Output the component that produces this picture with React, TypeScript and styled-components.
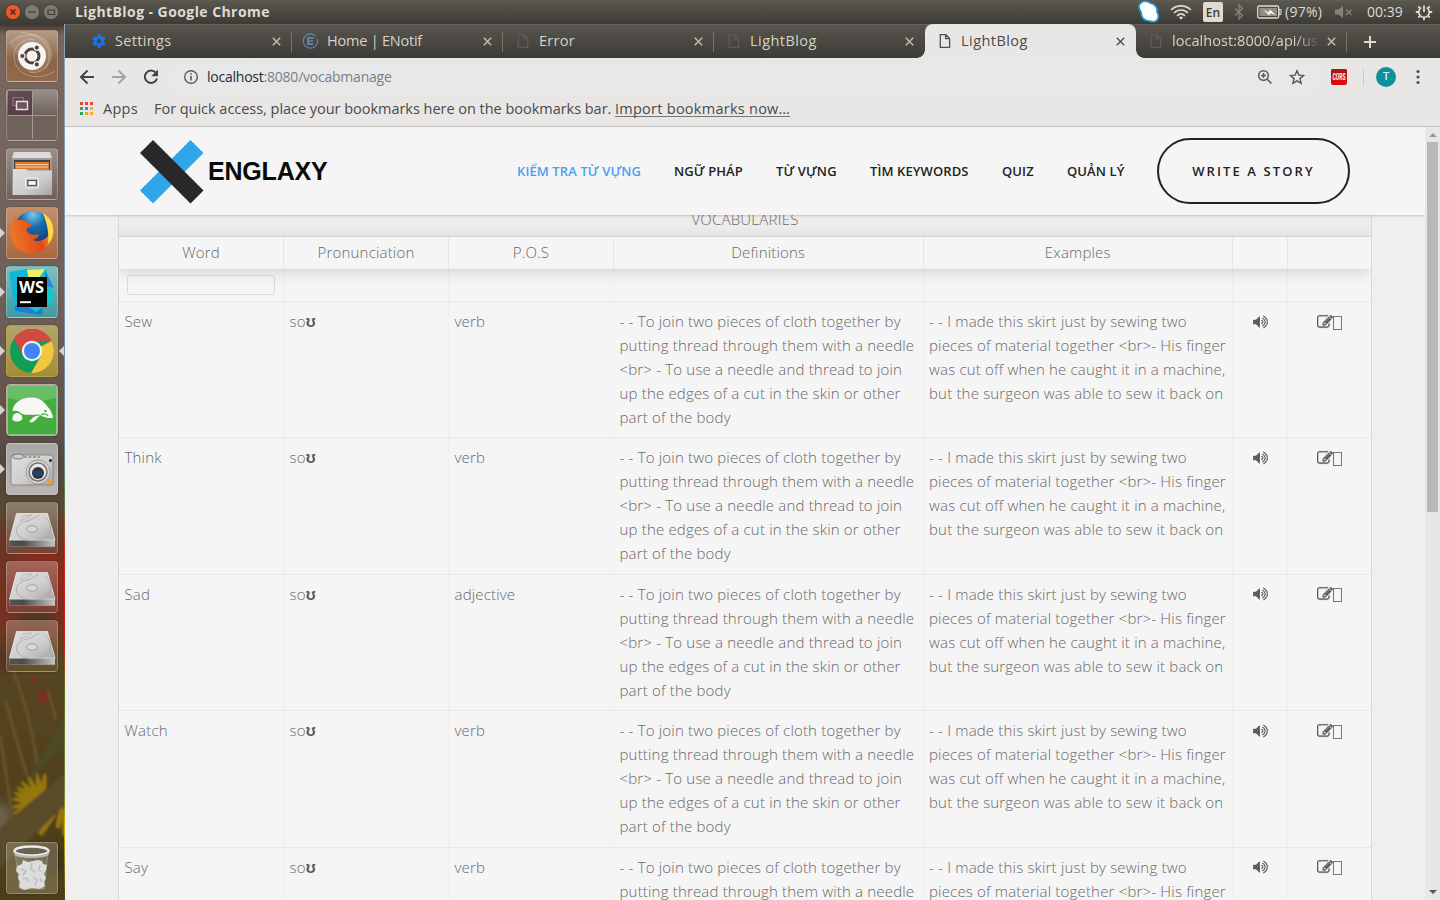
import React from "react";
import styled, { createGlobalStyle } from "styled-components";

const UI_FONT = `"Open Sans", "Noto Sans", sans-serif`;

const GlobalStyle = createGlobalStyle`
  * { box-sizing: border-box; }
  html, body { margin: 0; padding: 0; overflow: hidden; }
  body { font-family: ${UI_FONT}; background: #efefef; }
`;

const Desktop = styled.div`
  width: 1440px;
  height: 900px;
  display: flex;
  flex-direction: column;
  overflow: hidden;
`;

/* ---------- top panel ---------- */

const Panel = styled.header`
  flex: none;
  height: 24px;
  display: flex;
  align-items: center;
  padding-left: 5px;
  color: #dfdbd2;
  background: linear-gradient(#5f5d53 0, #57554c 2px, #3c3b37 100%);
`;

const WindowButtons = styled.div`
  display: flex;
  gap: 3px;
  width: 70px;
`;

const WindowTitle = styled.div`
  font-size: 14px;
  font-weight: 700;
  letter-spacing: 0.43px;
  line-height: 24px;
  white-space: nowrap;
  width: 1061px;
`;

const Tray = styled.div`
  display: flex;
  align-items: center;
  height: 24px;
  svg { display: block; flex: none; }
`;

const Lang = styled.span`
  width: 20px;
  height: 20px;
  margin: 0 10px 0 11px;
  border-radius: 2px;
  background: #dfdbd2;
  color: #3c3b37;
  font: 600 12px/21px ${UI_FONT};
  text-align: center;
`;

const TrayText = styled.span<{ $w: number; $ml: number; $ls?: number }>`
  width: ${(p) => p.$w}px;
  margin-left: ${(p) => p.$ml}px;
  letter-spacing: ${(p) => p.$ls ?? 0}px;
  font-size: 14px;
  line-height: 24px;
  white-space: nowrap;
`;

/* ---------- launcher ---------- */

const Body = styled.div`
  flex: 1;
  min-height: 0;
  display: flex;
`;

const Launcher = styled.aside`
  position: relative;
  flex: none;
  width: 65px;
  height: 876px;
  padding: 6px 0 6px 6px;
  display: flex;
  flex-direction: column;
  gap: 7px;
  overflow: hidden;
`;

const Wallpaper = styled.svg`
  position: absolute;
  inset: 0;
`;

const Tile = styled.div<{ $bg: string; $edge?: string; $last?: boolean }>`
  position: relative;
  flex: none;
  width: 52px;
  height: 52px;
  border-radius: 4px;
  border: 1px solid ${(p) => p.$edge ?? "rgba(255,255,255,.25)"};
  background: ${(p) => p.$bg};
  box-shadow: 0 0 2px rgba(0, 0, 0, 0.3);
  margin-top: ${(p) => (p.$last ? "auto" : "0")};
  > svg { display: block; width: 50px; height: 50px; }
`;

const Marker = styled.span<{ $right?: boolean }>`
  position: absolute;
  top: 20px;
  ${(p) => (p.$right ? "right: -7px; border-right: 5px solid #d5d2cd;" : "left: -7px; border-left: 5px solid #d5d2cd;")}
  border-top: 5px solid transparent;
  border-bottom: 5px solid transparent;
`;

/* ---------- browser ---------- */

const Browser = styled.main`
  flex: 1;
  min-width: 0;
  display: flex;
  flex-direction: column;
`;

const TabStrip = styled.div`
  flex: none;
  height: 34px;
  display: flex;
  padding-left: 16px;
  border-top: 1px solid #66645a;
  background: linear-gradient(#57554c, #3c3b37);
`;

const TabBox = styled.div<{ $active?: boolean; $sep?: boolean }>`
  position: relative;
  flex: none;
  width: 211px;
  height: 34px;
  margin-top: -1px;
  display: flex;
  align-items: center;
  padding: 0 11px 0 10px;
  color: ${(p) => (p.$active ? "#4c4c4c" : "#d5d2c9")};
  background: ${(p) => (p.$active ? "#e9e7e5" : "transparent")};
  border-radius: 8px 8px 0 0;
  ${(p) =>
    p.$sep &&
    `&::after { content: ""; position: absolute; right: 0; top: 8px; width: 1px; height: 20px; background: #777469; }`}
  ${(p) =>
    p.$active &&
    `&::before, &::after { content: ""; position: absolute; bottom: 0; width: 8px; height: 8px; }
     &::before { left: -8px; background: radial-gradient(circle at 0 0, transparent 7.5px, #e9e7e5 8px); }
     &::after { right: -8px; background: radial-gradient(circle at 100% 0, transparent 7.5px, #e9e7e5 8px); }`}
  svg { display: block; flex: none; }
`;

const TabTitle = styled.span<{ $fade?: boolean; $ls?: number; $ml?: number }>`
  flex: 1;
  min-width: 0;
  margin: 0 5px 0 ${(p) => p.$ml ?? 10}px;
  overflow: hidden;
  white-space: nowrap;
  font-size: 14.5px;
  letter-spacing: ${(p) => p.$ls ?? 0.2}px;
  line-height: 34px;
  ${(p) => p.$fade && "mask-image: linear-gradient(90deg, #000 82%, transparent 99%);"}
`;

const NewTab = styled.div`
  height: 33px;
  display: flex;
  align-items: center;
  padding: 0 0 0 17px;
`;

const Toolbar = styled.div`
  flex: none;
  height: 37px;
  display: flex;
  align-items: center;
  padding-left: 13px;
  background: #e9e7e5;
  svg { display: block; flex: none; }
`;

const NavButtons = styled.div`
  display: flex;
  gap: 14px;
  width: 95px;
`;

const Omnibox = styled.div`
  width: 1143px;
  height: 28px;
  border-radius: 14px;
  background: #e7e8ea;
  display: flex;
  align-items: center;
  padding: 0 11px 0 10px;
`;

const Url = styled.span`
  flex: 1;
  margin-left: 8px;
  font-size: 14px;
  letter-spacing: -0.23px;
  color: #7b7e83;
  b { font-weight: 400; color: #26282c; }
`;

const Cors = styled.svg`
  margin-left: 15px;
`;

const Split = styled.span`
  width: 1px;
  height: 16px;
  margin: 0 12px 0 16px;
  background: #c9c7c5;
`;

const Avatar = styled.span`
  width: 20px;
  height: 20px;
  margin-right: 20px;
  border-radius: 50%;
  background: #0b929d;
  color: #d8eef0;
  font: 500 11px/20px Roboto, sans-serif;
  text-align: center;
`;

const Bookmarks = styled.div`
  flex: none;
  height: 32px;
  display: flex;
  align-items: center;
  padding: 0 0 4px 15px;
  border-bottom: 1px solid #c4c2c0;
  background: #e9e7e5;
  color: #4a4a4a;
  font-size: 14.5px;
  white-space: nowrap;
`;

const AppsLabel = styled.span`
  width: 51px;
  margin-left: 10px;
  letter-spacing: 0.25px;
`;

const Hint = styled.span`
  width: 461px;
  letter-spacing: -0.03px;
`;

const ImportLink = styled.span`
  border-bottom: 1px solid #777;
  line-height: 15px;
  letter-spacing: 0.26px;
`;

/* ---------- page ---------- */

const Viewport = styled.div`
  flex: 1;
  min-height: 0;
  display: flex;
`;

const Page = styled.div`
  width: 1360px;
  height: 773px;
  overflow: hidden;
  background: #efefef;
`;

const SiteHeader = styled.div`
  position: relative;
  z-index: 2;
  height: 88px;
  display: flex;
  align-items: center;
  justify-content: space-between;
  padding: 0 75px;
  background: #f5f5f5;
  box-shadow: 0 1px 2px rgba(0, 0, 0, 0.18);
`;

const Brand = styled.div`
  display: flex;
  align-items: center;
  gap: 4px;
  font: 700 25px/64px "Liberation Sans", Arial, sans-serif;
  letter-spacing: -0.2px;
  color: #0a0a0a;
  svg { display: block; margin-top: 1px; }
`;

const Nav = styled.nav`
  display: flex;
  align-items: center;
  font-size: 13px;
  font-weight: 600;
  letter-spacing: 0.1px;
  white-space: nowrap;
`;

const NavItem = styled.a<{ $w: number; $on?: boolean }>`
  width: ${(p) => p.$w}px;
  color: ${(p) => (p.$on ? "#4a9ff0" : "#222")};
`;

const StoryButton = styled.a`
  width: 193px;
  height: 66px;
  border: 2px solid #222;
  border-radius: 33px;
  line-height: 62px;
  text-align: center;
  letter-spacing: 2.1px;
  color: #222;
`;

const Table = styled.div`
  width: 1254px;
  margin: -1px 0 0 53px;
  border: solid #d8d8d8;
  border-width: 0 1px;
  background: #f5f5f5;
  color: #686868;
  font-size: 15px;
  font-weight: 300;
  letter-spacing: 0.18px;
  line-height: 24px;
`;

const Caption = styled.div`
  height: 23px;
  padding-bottom: 2px;
  display: flex;
  align-items: flex-end;
  justify-content: center;
  letter-spacing: 0.22px;
  line-height: 30px;
  background: linear-gradient(#ececec 0 60%, #e4e4e4);
  border-bottom: 1px solid #d3d3d3;
`;

const Columns = styled.div<{ $h: number }>`
  display: grid;
  grid-template-columns: 165px 165px 165px 309.5px 309.5px 55px 83px;
  height: ${(p) => p.$h}px;
`;

const HeadRow = styled(Columns)`
  position: relative;
  z-index: 1;
  background: #f5f5f5;
  box-shadow: 0 2px 15px rgba(0, 0, 0, 0.16);
  clip-path: inset(0 0 -20px 0);
`;

const HeadCell = styled.div`
  border-right: 1px solid #e7e7e7;
  text-align: center;
  line-height: 31px;
  &:last-child { border-right: 0; }
`;

const BodyRow = styled(Columns)`
  border-bottom: 1px solid #e7e7e7;
`;

const Cell = styled.div<{ $center?: boolean }>`
  border-right: 1px solid #efefef;
  padding: 7px 0 0 ${(p) => (p.$center ? 0 : 5.5)}px;
  white-space: nowrap;
  ${(p) => p.$center && "display: flex; justify-content: center; align-items: flex-start;"}
  &:last-child { border-right: 0; }
  b { color: #5a5a5a; font: 700 16px/20px "Liberation Sans", "DejaVu Sans", sans-serif; }
`;

const FilterCell = styled(Cell)`
  padding: 6px 8px 0;
`;

const FilterInput = styled.div`
  width: 148px;
  height: 20px;
  border: 1px solid #dadada;
  border-radius: 3px;
`;

const IconRow = styled.span`
  display: flex;
  padding-top: 4.5px;
`;

const MissingGlyph = styled.i`
  width: 9px;
  height: 14px;
  margin: 2px 0 0;
  border: 1px solid #777;
`;

const Scrollbar = styled.div`
  flex: none;
  width: 15px;
  height: 773px;
  display: flex;
  flex-direction: column;
  align-items: center;
  background: #e7e7e7;
  padding: 6px 0;
`;

const Thumb = styled.div`
  width: 11px;
  height: 370px;
  margin-top: 5px;
  margin-bottom: auto;
  background: #b8b8b8;
`;

const Arrow = styled.i<{ $down?: boolean }>`
  border: solid transparent;
  ${(p) => (p.$down ? "border-width: 4px 4px 0; border-top-color: #555;" : "border-width: 0 4px 4px; border-bottom-color: #999;")}
`;

/* ---------- icons ---------- */

const Close = ({ color }: { color: string }) => (
  <svg width="9" height="9" viewBox="0 0 9 9" stroke={color} strokeWidth="1.5">
    <path d="M.8.8l7.4 7.4M8.2.8L.8 8.2" />
  </svg>
);

const PageIcon = ({ color }: { color: string }) => (
  <svg width="16" height="16" viewBox="0 0 16 16" fill="none" stroke={color} strokeWidth="1.3">
    <path d="M4 1.7h5.6L13.3 5.4v9H4zM9.4 1.8v3.8h3.8" transform="translate(1.3 0)" />
  </svg>
);

const GearIcon = () => (
  <svg width="16" height="16" viewBox="0 0 24 24" fill="#1a73e8">
    <path d="M19.43 12.98c.04-.32.07-.64.07-.98s-.03-.66-.07-.98l2.11-1.65c.19-.15.24-.42.12-.64l-2-3.46c-.12-.22-.39-.3-.61-.22l-2.49 1c-.52-.4-1.08-.73-1.69-.98l-.38-2.65C14.46 2.18 14.25 2 14 2h-4c-.25 0-.46.18-.49.42l-.38 2.65c-.61.25-1.17.59-1.69.98l-2.49-1c-.23-.09-.49 0-.61.22l-2 3.46c-.13.22-.07.49.12.64l2.11 1.65c-.04.32-.07.65-.07.98s.03.66.07.98l-2.11 1.65c-.19.15-.24.42-.12.64l2 3.46c.12.22.39.3.61.22l2.49-1c.52.4 1.08.73 1.69.98l.38 2.65c.03.24.24.42.49.42h4c.25 0 .46-.18.49-.42l.38-2.65c.61-.25 1.17-.59 1.69-.98l2.49 1c.23.09.49 0 .61-.22l2-3.46c.12-.22.07-.49-.12-.64l-2.11-1.65zM12 15.5c-1.93 0-3.5-1.57-3.5-3.5s1.57-3.5 3.5-3.5 3.5 1.57 3.5 3.5-1.57 3.5-3.5 3.5z" />
  </svg>
);

const ENotifIcon = () => (
  <svg width="17" height="18" viewBox="0 0 18 18" fill="none">
    <defs>
      <linearGradient id="en" x1="0" y1="0" x2="0" y2="18" gradientUnits="userSpaceOnUse">
        <stop offset="0" stopColor="#4f98a5" />
        <stop offset="1" stopColor="#7773b5" />
      </linearGradient>
    </defs>
    <circle cx="9" cy="9" r="7.6" stroke="url(#en)" strokeWidth="1.2" strokeDasharray="42 3" />
    <path d="M12.2 5.7H6.4v6.6h5.8M6.4 9h5.2" stroke="url(#en)" strokeWidth="1.8" />
  </svg>
);

const SpeakerIcon = () => (
  <svg width="17" height="16" viewBox="0 0 1792 1792" fill="#5c5c5c">
    <path d="M832 352v1088q0 26-19 45t-45 19-45-19l-333-333h-262q-26 0-45-19t-19-45v-384q0-26 19-45t45-19h262l333-333q19-19 45-19t45 19 19 45zm384 544q0 76-42.5 141.5t-112.5 93.5q-10 5-25 5-26 0-45-18.5t-19-45.5q0-21 12-35.5t29-25 34-23 29-36 12-56.5-12-56.5-29-36-34-23-29-25-12-35.5q0-27 19-45.5t45-18.5q15 0 25 5 70 27 112.5 93t42.5 142zm256 0q0 153-85 282.5t-225 188.5q-13 5-25 5-27 0-46-19t-19-45q0-39 39-59 56-29 76-44 74-54 115.5-135.5t41.5-173.5-41.5-173.5-115.5-135.5q-20-15-76-44-39-20-39-59 0-26 19-45t45-19q13 0 26 5 140 59 225 188.5t85 282.5zm256 0q0 230-127 422.5t-338 283.5q-13 5-26 5-26 0-45-19t-19-45q0-36 39-59 7-4 22.5-10.5t22.5-10.5q46-25 82-51 123-91 192-227t69-289-69-289-192-227q-36-26-82-51-7-4-22.5-10.5t-22.5-10.5q-39-23-39-59 0-26 19-45t45-19q13 0 26 5 211 91 338 283.5t127 422.5z" />
  </svg>
);

const EditIcon = () => (
  <svg width="16" height="16" viewBox="0 0 1792 1792" fill="#5c5c5c" stroke="#5c5c5c" strokeWidth="30">
    <path d="M888 1184l116-116-152-152-116 116v56h96v96h56zm440-720q-16-16-33 1l-350 350q-17 17-1 33t33-1l350-350q17-17 1-33zm80 594v190q0 119-84.5 203.5t-203.5 84.5h-832q-119 0-203.5-84.5t-84.5-203.5v-832q0-119 84.5-203.5t203.5-84.5h832q63 0 117 25 15 7 18 23 3 17-9 29l-49 49q-14 14-32 8-23-6-45-6h-832q-66 0-113 47t-47 113v832q0 66 47 113t113 47h832q66 0 113-47t47-113v-126q0-13 9-22l64-64q15-15 35-7t20 29zm-96-738l288 288-672 672h-288v-288zm444 132l-92 92-288-288 92-92q28-28 68-28t68 28l152 152q28 28 28 68t-28 68z" />
  </svg>
);

const DriveIcon = () => (
  <svg viewBox="0 0 50 50">
    <path d="M9.5 10.500h31l7.500 26v7H2.500v-7z" fill="#c9c9c9" />
    <path d="M9.500 10.500h31l7.500 26.500H2.500z" fill="url(#metal)" stroke="#eee" strokeWidth=".6" />
    <path d="M2.500 37.500h45.500v6H2.500z" fill="url(#driveFront)" />
    <path d="M38 14c8 6 8 18-3 22-8 3-20 2-24-4-5-8 3-13 9-14 5-1 7-3 12-6" fill="none" stroke="#a9a9a9" strokeWidth=".9" />
    <path d="M13 18l3-5 9-1-4 3z" fill="none" stroke="#b5b5b5" strokeWidth=".8" />
    <ellipse cx="25" cy="26" rx="5.500" ry="3.200" fill="#d8d8d8" stroke="#999" strokeWidth=".9" />
  </svg>
);

const UbuntuIcon = () => (
  <svg viewBox="0 0 50 50">
    <g fill="none" stroke="#fff" strokeOpacity=".28">
      <path d="M2 12C20-4 46 4 44 26c-1 10-12 18-22 15" fill="#fff" fillOpacity=".1" />
      <path d="M48 40C30 52 6 44 7 24 8 14 18 6 28 9" />
      <path d="M14 1C40 4 48 22 38 38" />
    </g>
    <circle cx="25" cy="25" r="14" fill="#f6f4f2" />
    <circle cx="25" cy="25" r="7" fill="none" stroke="#54433a" strokeWidth="3" />
    <g fill="#54433a" stroke="#f6f4f2" strokeWidth="1.200">
      <circle cx="15.400" cy="25" r="2.700" />
      <circle cx="29.800" cy="16.600" r="2.700" />
      <circle cx="29.800" cy="33.400" r="2.700" />
    </g>
  </svg>
);

const WorkspacesIcon = () => (
  <svg viewBox="0 0 50 50">
    <path d="M1 1h24v24H1z" fill="#4c2c3c" fillOpacity=".7" />
    <path d="M25.500 1v48M1 25.500h48" stroke="#a39a93" strokeWidth="1" />
    <path d="M6 7.500h10v8H6z" fill="none" stroke="#8d7a80" strokeWidth="1.200" />
    <path d="M9.500 11.500h11v8h-11z" fill="#6c5560" stroke="#e8e0e0" strokeWidth="1.400" />
  </svg>
);

const FilesIcon = () => (
  <svg viewBox="0 0 50 50">
    <path d="M7 3h36l2 6v37H5V9z" fill="#9a9a9a" />
    <path d="M7 3h36l2 6H5z" fill="#ddd" />
    <path d="M7 11h36v10H7z" fill="#444" />
    <path d="M8 13h34v8H8z" fill="#e07830" />
    <path d="M9 15.500h32M9 18h32" stroke="#f7cf9a" strokeWidth="1.200" />
    <path d="M6 20h13l2 1.500h24V46H6z" fill="url(#metal)" />
    <rect x="18.500" y="29" width="13" height="10" rx="2" fill="#c9c9c9" stroke="#f1f1f1" />
    <rect x="20.800" y="31.500" width="8.500" height="5" fill="#fafafa" stroke="#555" strokeWidth="1.300" />
  </svg>
);

const FirefoxIcon = () => (
  <svg viewBox="0 0 50 50">
    <circle cx="26" cy="22" r="19" fill="url(#globe)" />
    <path d="M40 7c8 8 9 22 1 31-9 10-27 10-34-2C2 28 3 18 6 13l2-6 3 5c4-1 8 0 10 3l4 1c-1 3-3 4-5 4-1 3 0 5 3 6 4 2 6-1 9 1-1 3-4 4-6 5 7 3 15-1 17-8 2-6 1-12-3-17z" fill="url(#fox)" />
    <path d="M36 5c9 5 13 17 8 27l-3 4c1-10 0-18-5-31z" fill="#ffd84d" />
  </svg>
);

const WebStormIcon = () => (
  <svg viewBox="0 0 50 50">
    <path d="M2 5l18-3 6 40-18 5z" fill="#12b7d6" />
    <path d="M24 3l15-1 8 29-5 9z" fill="#10c6cf" />
    <path d="M20 3l18-1-8 12H22z" fill="#f1ee62" />
    <path d="M8 38h28l-1 10-27-4z" fill="#1d7fd0" />
    <path d="M22 40h14l-7 5z" fill="#10c6cf" />
    <path d="M38 3l9 18-9-2z" fill="#2a8bd8" />
    <path d="M10 10h30v30H10z" fill="#000" />
    <text x="12" y="26" fill="#fff" fontFamily="Open Sans, sans-serif" fontSize="16.500" fontWeight="700" textLength="25" lengthAdjust="spacingAndGlyphs">WS</text>
    <path d="M13 34.200h11v2H13z" fill="#fff" />
  </svg>
);

const ChromeIcon = () => (
  <svg viewBox="0 0 50 50">
    <circle cx="25" cy="25" r="22" fill="#0f9d58" />
    <path d="M25 25L44.500 15A22 22 0 0 1 24 47l10-17z" fill="#f4c63d" />
    <path d="M25 15h19.700A22 22 0 0 0 6.800 12.600L16 29z" fill="#d04a41" />
    <circle cx="25" cy="25" r="10.200" fill="#f1f1f1" />
    <circle cx="25" cy="25" r="8" fill="#4285f4" />
  </svg>
);

const MoleIcon = () => (
  <svg viewBox="0 0 50 50">
    <path d="M1 1h48v48H1z" fill="#43ae3f" />
    <path d="M1 1h48v12Q25 20 1 13z" fill="#fff" fillOpacity=".2" />
    <path d="M5.500 26c1-8 8-13.500 19-13.500 9 0 13 5 16 9 3 3 5 7 5.500 11.500-4 .5-9-.500-14-3.500-6 0-12 1-17-.500-3-3.500-6-3.500-9.500-3z" fill="#f5f7f4" />
    <path d="M5.500 35c-1-9 9-9 10-2 0 3-5 5-10 2zM33 30.500l-5 5c-2 2-4 2-6 1.500 3-4 6-7 11-6.500z" fill="#f5f7f4" />
    <path d="M34 30c3-2 6-1 7 1" fill="none" stroke="#43ae3f" strokeWidth="1.200" />
    <circle cx="38.500" cy="26" r="1.200" fill="#43ae3f" />
  </svg>
);

const CameraIcon = () => (
  <svg viewBox="0 0 50 50">
    <rect x="4" y="11" width="42" height="30" rx="2" fill="url(#metal)" stroke="#888" />
    <ellipse cx="11" cy="12.500" rx="5.500" ry="2.500" fill="#ccc" stroke="#777" />
    <path d="M17 13h16" stroke="#666" strokeDasharray="3 1.500" />
    <circle cx="31" cy="28" r="12" fill="#d5d5d5" stroke="#999" />
    <circle cx="31" cy="28" r="9" fill="#e5e5e5" stroke="#777" strokeWidth="1.500" />
    <circle cx="31" cy="29" r="6" fill="#333" />
    <rect x="27" y="27" width="8" height="5" fill="#16458c" />
    <path d="M41 36h3v3h-3z" fill="#f0a020" />
    <circle cx="43.500" cy="16.500" r="1.500" fill="#222" />
  </svg>
);

const TrashIcon = () => (
  <svg viewBox="0 0 50 50">
    <path d="M8 10h33l-4 36H13z" fill="#ddd" fillOpacity=".15" stroke="#ddd" strokeOpacity=".3" />
    <path d="M10 23l5-2 1-4 5 2 5-1 5-1 4 1 1 3 4 1-1 5-2 4 2 4-2 4 1 4-5 3-8-1-8 2-5-3 1-5-2-4 1-4-3-3z" fill="#dcdcdc" />
    <path d="M14 26l5 2-3 4M16 36l4-1 2 4M25 20l-1 6 4 3M26 34l4 3-2 5M33 22l-1 5 3 2M33 35l2 4" fill="none" stroke="#bdbdbd" strokeWidth="1.500" />
    <ellipse cx="24.500" cy="8" rx="17" ry="4.500" fill="#6a6253" stroke="#e9e9e9" strokeWidth="2.500" />
    <path d="M7.500 9c2 5 32 5 34 0v3c-3 4-31 4-34 0z" fill="#b5b9b9" />
  </svg>
);

const Shades = () => (
  <svg width="0" height="0" style={{ position: "absolute" }}>
    <defs>
      <linearGradient id="metal" x1="0" y1="0" x2="1" y2="1">
        <stop offset="0" stopColor="#dedede" />
        <stop offset=".55" stopColor="#cfcfcf" />
        <stop offset="1" stopColor="#a5a5a5" />
      </linearGradient>
      <linearGradient id="driveFront">
        <stop offset="0" stopColor="#555" />
        <stop offset=".3" stopColor="#4b4b4b" />
        <stop offset="1" stopColor="#c5c5c5" />
      </linearGradient>
      <radialGradient id="globe" cx=".5" cy=".1" r=".8">
        <stop offset="0" stopColor="#7bc9ec" />
        <stop offset=".4" stopColor="#1b6cae" />
        <stop offset="1" stopColor="#143a70" />
      </radialGradient>
      <linearGradient id="fox" x1="0" y1=".3" x2="1" y2=".1">
        <stop offset="0" stopColor="#ee7424" />
        <stop offset=".6" stopColor="#dc4c1c" />
        <stop offset="1" stopColor="#fbb829" />
      </linearGradient>
    </defs>
  </svg>
);

const PETALS = [-172, -160, -148, -134, -118, -100, -84, 160, 172];

const LauncherBackdrop = () => (
  <Wallpaper width="65" height="876" viewBox="0 24 65 876" preserveAspectRatio="none">
    <defs>
      <linearGradient id="wall" x1="0" y1="24" x2="0" y2="900" gradientUnits="userSpaceOnUse">
        <stop offset="0" stopColor="#41352f" />
        <stop offset=".012" stopColor="#75655f" />
        <stop offset=".1" stopColor="#78675e" />
        <stop offset=".3" stopColor="#70605a" />
        <stop offset=".44" stopColor="#64554b" />
        <stop offset=".5" stopColor="#514740" />
        <stop offset=".55" stopColor="#57492d" />
        <stop offset=".59" stopColor="#6d3626" />
        <stop offset=".68" stopColor="#77301f" />
        <stop offset=".73" stopColor="#564521" />
        <stop offset="1" stopColor="#4b3d18" />
      </linearGradient>
      <linearGradient id="edge" x1="0" y1="24" x2="0" y2="900" gradientUnits="userSpaceOnUse">
        <stop offset="0" stopColor="#8fa3bb" />
        <stop offset=".48" stopColor="#7688a0" />
        <stop offset=".55" stopColor="#5a7a40" />
        <stop offset=".6" stopColor="#c02c20" />
        <stop offset=".7" stopColor="#d01c1c" />
        <stop offset=".76" stopColor="#5b6c20" />
        <stop offset=".88" stopColor="#6f8535" />
        <stop offset=".92" stopColor="#d5b400" />
        <stop offset="1" stopColor="#46401a" />
      </linearGradient>
      <filter id="soft"><feGaussianBlur stdDeviation="5" /></filter>
      <filter id="softer"><feGaussianBlur stdDeviation=".8" /></filter>
    </defs>
    <path d="M0 24h65v876H0z" fill="url(#wall)" />
    <g filter="url(#soft)">
      <ellipse cx="40" cy="580" rx="30" ry="30" fill="#8a2a1c" />
      <ellipse cx="36" cy="618" rx="16" ry="8" fill="#473a20" />
      <ellipse cx="5" cy="660" rx="12" ry="14" fill="#5a3522" />
      <ellipse cx="0" cy="820" rx="12" ry="18" fill="#6d5e4b" />
      <ellipse cx="50" cy="860" rx="16" ry="14" fill="#3c3012" />
    </g>
    <g filter="url(#softer)">
      <path d="M28 674l10 3-4 6zM36 695l9-6 6 8-9 9z" fill="#7c2f20" />
      <path d="M14 672c14 40 20 66 24 98M0 735l14 90M5 700l22 76M48 690l8 30" stroke="#67532a" strokeWidth="3" fill="none" />
      <path d="M65 713v32L35 776l-7 4z" fill="#4d4a22" />
      {PETALS.map((a) => (
        <ellipse key={a} cx="17" cy="0" rx="13" ry="2.600" fill="#95770f" transform={`translate(42 803) rotate(${a})`} />
      ))}
      <path d="M53 816l-12 17M50 814l-7 10M62 806l-4 20M64 812l1 22" stroke="#95770f" strokeWidth="5" strokeLinecap="round" />
      <path d="M65 773v32L0 868v-40z" fill="#5a4b2c" />
    </g>
    <path d="M64.500 24v876" stroke="url(#edge)" />
  </Wallpaper>
);

/* ---------- data ---------- */

const TABS = [
  { title: "Settings", icon: "gear", sep: true, ls: 0.35, ml: 8 },
  { title: "Home | ENotif", icon: "en", sep: true, ls: -0.22, ml: 8 },
  { title: "Error", icon: "page", sep: true, ls: 0.25 },
  { title: "LightBlog", icon: "page", ls: 0.45 },
  { title: "LightBlog", icon: "page", active: true, ls: 0.45 },
  { title: "localhost:8000/api/us", icon: "page", sep: true, fade: true, ls: 0.05 },
];

const NAV: [string, number][] = [
  ["KIỂM TRA TỪ VỰNG", 157],
  ["NGỮ PHÁP", 102],
  ["TỪ VỰNG", 94],
  ["TÌM KEYWORDS", 132],
  ["QUIZ", 65],
  ["QUẢN LÝ", 90],
];

const WORDS = [
  ["Sew", "verb"],
  ["Think", "verb"],
  ["Sad", "adjective"],
  ["Watch", "verb"],
  ["Say", "verb"],
];

const DEFINITION = [
  "- - To join two pieces of cloth together by",
  "putting thread through them with a needle",
  "<br> - To use a needle and thread to join",
  "up the edges of a cut in the skin or other",
  "part of the body",
];

const EXAMPLE = [
  "- - I made this skirt just by sewing two",
  "pieces of material together <br>- His finger",
  "was cut off when he caught it in a machine,",
  "but the surgeon was able to sew it back on",
];

const HEADS = ["Word", "Pronunciation", "P.O.S", "Definitions", "Examples", "", ""];

const APP_COLORS = ["#ea4335", "#ea4335", "#ea4335", "#34a05a", "#3b82e8", "#fbae17", "#34a05a", "#f2a80c", "#fbae17"];

export default function App() {
  return (
    <>
      <GlobalStyle />
      <Shades />
      <Desktop>
        <Panel>
          <WindowButtons>
            <svg width="16" height="16" viewBox="0 0 16 16"><circle cx="8" cy="8" r="7.600" fill="#e9592b" stroke="#3a2a20" strokeWidth=".6" /><path d="M5.500 5.500l5 5M10.500 5.500l-5 5" stroke="#40251a" strokeWidth="1.300" /></svg>
            <svg width="16" height="16" viewBox="0 0 16 16"><circle cx="8" cy="8" r="7.600" fill="#7c7a72" stroke="#33322e" strokeWidth=".6" /><path d="M4.500 8h7" stroke="#3c3b37" strokeWidth="1.300" /></svg>
            <svg width="16" height="16" viewBox="0 0 16 16"><circle cx="8" cy="8" r="7.600" fill="#7c7a72" stroke="#33322e" strokeWidth=".6" /><path d="M5 6h6.500v4.500H5z" fill="none" stroke="#3c3b37" strokeWidth="1.200" /></svg>
          </WindowButtons>
          <WindowTitle>LightBlog - Google Chrome</WindowTitle>
          <Tray>
            <svg width="24" height="24" viewBox="0 0 24 24"><path d="M4 4c3-4 8-3 10-1 5 1 8 5 7 9 2 3 2 7-1 9-3 2-5 0-7 0-5 0-8-4-8-9C3 9 2 6 4 4z" fill="#fff" stroke="#1d9bd8" strokeWidth="1.700" /></svg>
            <svg width="22" height="18" viewBox="0 0 22 18" fill="none" stroke="#dfdbd2" strokeWidth="1.700" style={{ marginLeft: 10 }}><path d="M1 7c5.500-5.500 14.500-5.500 20 0M4 10c4-4 10-4 14 0M7 12.800c2.500-2.400 5.500-2.400 8 0" /><path d="M9 14.500c1.500-1.200 2.500-1.200 4 0l-2 2.200z" fill="#dfdbd2" stroke="none" /></svg>
            <Lang>En</Lang>
            <svg width="12" height="18" viewBox="0 0 12 18" fill="none" stroke="#85837b" strokeWidth="1.300"><path d="M2 5.500l7.500 7L6 16V2l3.500 3.500-7.500 7" /></svg>
            <svg width="25" height="14" viewBox="0 0 25 14" style={{ marginLeft: 12 }}><rect x=".7" y="1" width="21" height="12" rx="1.500" fill="none" stroke="#dfdbd2" strokeWidth="1.300" /><rect x="2.500" y="3" width="17.400" height="8" fill="#8e8c84" /><path d="M22 4.500h2v5h-2z" fill="none" stroke="#dfdbd2" /><path d="M6 4.500l6 3 .5-3L19 10l-6-2-.5 2.500z" fill="#fff" /></svg>
            <TrayText $w={40} $ml={3} $ls={0.25}>(97%)</TrayText>
            <svg width="18" height="14" viewBox="0 0 18 14" style={{ marginLeft: 10 }}><path d="M0 4.500h3.500L8 1v12L3.500 9.500H0z" fill="#85837b" /><path d="M11 4.500l5.500 5.500M16.500 4.500L11 10" stroke="#85837b" strokeWidth="1.400" /></svg>
            <TrayText $w={37} $ml={14}>00:39</TrayText>
            <svg width="18" height="18" viewBox="0 0 18 18" fill="none" stroke="#dfdbd2" style={{ marginLeft: 11 }}><path d="M6.200 4.600a5.300 5.300 0 1 0 5.600 0" strokeWidth="1.700" /><path d="M9 2.500V9" strokeWidth="1.800" /><path d="M.8 9h2.700M14.500 9h2.700M9 14.500v2.700M3.300 3.300l1.700 1.700M14.700 3.300L13 5M3.300 14.700L5 13M14.700 14.700L13 13" strokeWidth="1.800" /></svg>
          </Tray>
        </Panel>

        <Body>
          <Launcher>
            <LauncherBackdrop />
            <Tile $bg="linear-gradient(#b59a88, #8d6446 60%, #94694a)"><UbuntuIcon /></Tile>
            <Tile $bg="linear-gradient(#9a908a, #6e625b 50%)"><WorkspacesIcon /></Tile>
            <Tile $bg="linear-gradient(#9b8f88, #6f6058)"><FilesIcon /></Tile>
            <Tile $bg="linear-gradient(#c2906d, #ab683c)"><FirefoxIcon /><Marker /></Tile>
            <Tile $bg="linear-gradient(#7fc0c0, #43989c)"><WebStormIcon /><Marker /></Tile>
            <Tile $bg="linear-gradient(#b5a56c, #a18d37)" $edge="#b7a24a"><ChromeIcon /><Marker /><Marker $right /></Tile>
            <Tile $bg="#8dc08a" $edge="#bda9a4"><MoleIcon /><Marker /></Tile>
            <Tile $bg="linear-gradient(#aaa6a1, #b9b5b1)"><CameraIcon /><Marker /></Tile>
            <Tile $bg="linear-gradient(rgba(190,180,170,.5), rgba(120,110,80,.3))"><DriveIcon /></Tile>
            <Tile $bg="linear-gradient(rgba(190,160,150,.5), rgba(140,90,80,.3))"><DriveIcon /></Tile>
            <Tile $bg="linear-gradient(rgba(190,150,140,.5), rgba(120,110,60,.3))"><DriveIcon /></Tile>
            <Tile $last $bg="rgba(170,160,130,.4)"><TrashIcon /></Tile>
          </Launcher>

          <Browser>
            <TabStrip>
              {TABS.map((t, i) => (
                <TabBox key={i} $active={t.active} $sep={t.sep}>
                  {t.icon === "gear" ? <GearIcon /> : t.icon === "en" ? <ENotifIcon /> : <PageIcon color={t.active ? "#4f4f4f" : "#5c5b56"} />}
                  <TabTitle $fade={t.fade} $ls={t.ls} $ml={t.ml}>{t.title}</TabTitle>
                  <Close color={t.active ? "#555" : "#bfbcb4"} />
                </TabBox>
              ))}
              <NewTab><svg width="12" height="12" viewBox="0 0 12 12" stroke="#dfdbd2" strokeWidth="2"><path d="M6 0v12M0 6h12" /></svg></NewTab>
            </TabStrip>

            <Toolbar>
              <NavButtons>
                <svg width="18" height="18" viewBox="0 0 18 18" fill="none" stroke="#444" strokeWidth="2"><path d="M16 9H3M9.500 2.500L3 9l6.500 6.500" /></svg>
                <svg width="18" height="18" viewBox="0 0 18 18" fill="none" stroke="#a5a4a2" strokeWidth="2"><path d="M2 9h13M8.500 2.500L15 9l-6.500 6.500" /></svg>
                <svg width="18" height="18" viewBox="0 0 18 18" fill="none" stroke="#444" strokeWidth="2"><path d="M13.800 4.700A6.200 6.200 0 1 0 15 10.500" /><path d="M16 1.500v6.800H9.200z" fill="#444" stroke="none" /></svg>
              </NavButtons>
              <Omnibox>
                <svg width="16" height="16" viewBox="0 0 16 16" fill="none" stroke="#5b5e63" strokeWidth="1.400"><circle cx="8" cy="8" r="6.300" /><path d="M8 7v4.500M8 4.300v1.500" strokeWidth="1.600" /></svg>
                <Url><b>localhost</b>:8080/vocabmanage</Url>
                <svg width="16" height="16" viewBox="0 0 16 16" fill="none" stroke="#55585c" strokeWidth="1.500"><circle cx="6.500" cy="6.500" r="4.800" /><path d="M10 10l4.500 4.500M6.500 4v5M4 6.500h5" /></svg>
                <svg width="16" height="16" viewBox="0 0 16 16" fill="none" stroke="#55585c" strokeWidth="1.400" style={{ marginLeft: 16 }}><path d="M8 1.800l1.900 4.300 4.700.4-3.600 3.100 1.100 4.600L8 11.800l-4.100 2.400L5 9.600 1.400 6.500l4.700-.4z" /></svg>
              </Omnibox>
              <Cors width="16" height="16" viewBox="0 0 16 16">
                <rect width="16" height="16" rx="2" fill="#d80c0c" />
                <path d="M0 2q0-2 2-2h12q2 0 2 2v5H0z" fill="#b01515" />
                <text x="1.500" y="11" fill="#fff" fontFamily="Roboto, sans-serif" fontSize="8.500" fontWeight="700" textLength="13" lengthAdjust="spacingAndGlyphs">CORS</text>
              </Cors>
              <Split />
              <Avatar>T</Avatar>
              <svg width="4" height="16" viewBox="0 0 4 16" fill="#4d4d4d"><circle cx="2" cy="2.500" r="1.600" /><circle cx="2" cy="8" r="1.600" /><circle cx="2" cy="13.500" r="1.600" /></svg>
            </Toolbar>

            <Bookmarks>
              <svg width="13" height="13" viewBox="0 0 13 13">
                {APP_COLORS.map((c, i) => <rect key={i} x={(i % 3) * 5} y={Math.floor(i / 3) * 5} width="3" height="3" fill={c} />)}
              </svg>
              <AppsLabel>Apps</AppsLabel>
              <Hint>For quick access, place your bookmarks here on the bookmarks bar.</Hint>
              <ImportLink>Import bookmarks now…</ImportLink>
            </Bookmarks>

            <Viewport>
              <Page>
                <SiteHeader>
                  <Brand>
                    <svg width="64" height="64" viewBox="0 0 64 64"><path d="M50.500 0L63.500 13 13 63.500 0 50.500z" fill="#31a5ea" /><path d="M13 0L63.500 50.500 50.500 63.500 0 13z" fill="#282828" /></svg>
                    ENGLAXY
                  </Brand>
                  <Nav>
                    {NAV.map(([label, w], i) => <NavItem key={label} $w={w} $on={i === 0}>{label}</NavItem>)}
                    <StoryButton>WRITE A STORY</StoryButton>
                  </Nav>
                </SiteHeader>

                <Table>
                  <Caption>VOCABULARIES</Caption>
                  <HeadRow $h={32}>
                    {HEADS.map((h, i) => <HeadCell key={i}>{h}</HeadCell>)}
                  </HeadRow>
                  <BodyRow $h={33}>
                    {HEADS.map((_, i) => <FilterCell key={i}>{i === 0 && <FilterInput />}</FilterCell>)}
                  </BodyRow>
                  {WORDS.map(([word, pos]) => (
                    <BodyRow key={word} $h={136.4}>
                      <Cell>{word}</Cell>
                      <Cell>so<b>ʊ</b></Cell>
                      <Cell>{pos}</Cell>
                      <Cell>{DEFINITION.map((l) => <div key={l}>{l}</div>)}</Cell>
                      <Cell>{EXAMPLE.map((l) => <div key={l}>{l}</div>)}</Cell>
                      <Cell $center><IconRow><SpeakerIcon /></IconRow></Cell>
                      <Cell $center><IconRow><EditIcon /><MissingGlyph /></IconRow></Cell>
                    </BodyRow>
                  ))}
                </Table>
              </Page>
              <Scrollbar>
                <Arrow />
                <Thumb />
                <Arrow $down />
              </Scrollbar>
            </Viewport>
          </Browser>
        </Body>
      </Desktop>
    </>
  );
}
